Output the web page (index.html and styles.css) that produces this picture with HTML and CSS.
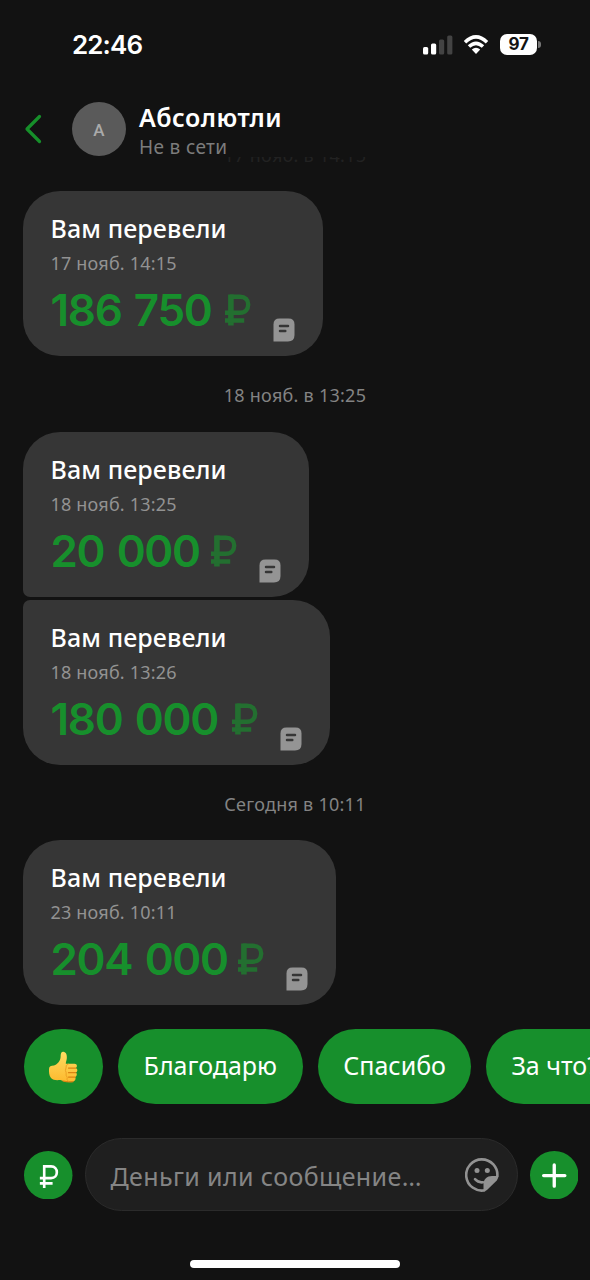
FILE: index.html
```html
<!DOCTYPE html>
<html lang="ru">
<head>
<meta charset="utf-8">
<title>Абсолютли</title>
<link rel="stylesheet" href="styles.css">
</head>
<body>
<svg class="defs" aria-hidden="true">
  <symbol id="note" viewBox="0 0 22 24">
    <path d="M.5 23.5V6.5Q.5.6 6.5.6H15.500Q21.500.6 21.500 6.500V17Q21.500 23.500 15 23.500Z" fill="#949494"/>
    <path d="M7 8.100H15M7 13.100H12.300" stroke="#363636" stroke-width="2.500" stroke-linecap="round"/>
  </symbol>
  <symbol id="ruble" viewBox="0 0 26 32">
    <g fill="none" stroke="#236f30"><path d="M5.900 31.500V.5" stroke-width="5.600"/><path d="M5 2.800H15C20.200 2.800 23.200 5.900 23.200 10.500C23.200 15.500 20.200 18.700 15 18.700H0M0 26.500H19.200" stroke-width="4.400"/></g>
  </symbol>
</svg>
<div class="screen">
  <header class="top">
    <div class="status">
      <span class="time">22:46</span>
      <div class="indicators">
        <svg class="signal" viewBox="0 0 30 20"><rect x="0" y="12" width="5.200" height="7.400" rx="1.500" fill="#fff"/><rect x="8" y="8.600" width="5.200" height="10.800" rx="1.500" fill="#fff"/><rect x="16" y="4.500" width="5.200" height="14.900" rx="1.500" fill="#434343"/><rect x="24.200" y="0.500" width="5.200" height="18.900" rx="1.500" fill="#434343"/></svg>
        <svg class="wifi" viewBox="0 0 26 20"><path d="M2 7.200Q13-3.300 24 7.200M6 11.600Q13 5 20 11.600" fill="none" stroke="#fff" stroke-width="3.500"/><path d="M8.800 14.600Q13 10.800 17.200 14.600L13 19Z" fill="#fff"/></svg>
        <div class="battery">97</div><i class="cap"></i>
      </div>
    </div>
    <div class="bar">
      <svg class="back" viewBox="0 0 18 30"><path d="M15.500 2.500L3 15L15.500 27.500" fill="none" stroke="#168f2a" stroke-width="3.200" stroke-linecap="round" stroke-linejoin="round"/></svg>
      <div class="avatar">А</div>
      <div class="who"><span class="name">Абсолютли</span><span class="presence">Не в сети</span></div>
    </div>
  </header>
  <main class="feed">
    <div class="date faded">17 нояб. в 14:15</div>
    <article class="card w1"><h2>Вам перевели</h2><time>17 нояб. 14:15</time><div class="row"><b class="amount">186 750</b><svg class="rub"><use href="#ruble"/></svg><svg class="note"><use href="#note"/></svg></div></article>
    <div class="date">18 нояб. в 13:25</div>
    <article class="card w2 first"><h2>Вам перевели</h2><time>18 нояб. 13:25</time><div class="row"><b class="amount">20 000</b><svg class="rub"><use href="#ruble"/></svg><svg class="note"><use href="#note"/></svg></div></article>
    <article class="card w3 last"><h2>Вам перевели</h2><time>18 нояб. 13:26</time><div class="row"><b class="amount">180 000</b><svg class="rub"><use href="#ruble"/></svg><svg class="note"><use href="#note"/></svg></div></article>
    <div class="date">Сегодня в 10:11</div>
    <article class="card w4"><h2>Вам перевели</h2><time>23 нояб. 10:11</time><div class="row"><b class="amount">204 000</b><svg class="rub"><use href="#ruble"/></svg><svg class="note"><use href="#note"/></svg></div></article>
  </main>
  <div class="chips">
    <button class="chip thumb"><svg viewBox="0 0 30 32">
      <defs><linearGradient id="skin" x1="0" y1="0" x2="0" y2="1"><stop offset="0" stop-color="#ffdc62"/><stop offset="1" stop-color="#fdb92e"/></linearGradient></defs>
      <path d="M1 18C1 15.500 3 14.800 6 14.600C9.500 13.500 12.500 9.500 12.600 6C12.600 2.500 13.300.7 15.300.8C18 1 19.200 4 18.800 7.500C18.600 9.500 17.800 11.300 17.800 12.800H26.500C29.300 12.800 29.700 16.200 27.700 17C30 17.800 29.800 21 27.700 21.600C29.500 22.500 29 25.600 27 26C28.200 27 27.500 30.300 25 30.500C20 31.200 16 30.800 12.500 29C9 29.200 5 29.500 3 27C1 24.500.9 21 1 18Z" fill="url(#skin)"/>
      <path d="M27.700 17.100H20.500M27.700 21.700H20.500M27 26.100H20.500M25 30.600Q20 31.300 15 30" fill="none" stroke="#dc8413" stroke-width="1.200" stroke-linecap="round"/><path d="M20.500 13Q17.300 13.600 18 17Q16.800 19.500 18.200 21.800Q17.500 24.500 19.200 26.300Q18.300 29 20.500 30.500" fill="none" stroke="#eda022" stroke-width="1"/>
    </svg></button>
    <button class="chip c1">Благодарю</button>
    <button class="chip c2">Спасибо</button>
    <button class="chip c3">За что?</button>
  </div>
  <footer class="composer">
    <svg class="round" viewBox="0 0 48 48"><circle cx="24" cy="24" r="24" fill="#178f2c"/><path d="M20 36.500V15.200H26.800C30.500 15.200 32.500 17.700 32.500 21C32.500 24.300 30.500 26.800 26.800 26.800H15.700M15.700 32H28.300" fill="none" stroke="#fff" stroke-width="2.600"/></svg>
    <div class="field"><span class="placeholder">Деньги или сообщение…</span>
      <svg class="sticker" viewBox="0 0 34 34"><path d="M20 32.200A15.600 15.600 0 1 1 32.300 18.500" fill="none" stroke="#929292" stroke-width="2.600"/><circle cx="12" cy="12.500" r="2.500" fill="#929292"/><circle cx="22.300" cy="12.500" r="2.500" fill="#929292"/><path d="M10 21.200Q13.500 25 18 24.200" fill="none" stroke="#929292" stroke-width="2.600" stroke-linecap="round"/><path d="M33.500 18H27C22 18 18.500 21.500 18.500 26V33.500Q20.500 33.400 22 32L31.800 22.500Q33.400 20.500 33.500 18Z" fill="#929292"/></svg>
    </div>
    <svg class="round" viewBox="0 0 48 48"><circle cx="24" cy="24" r="24" fill="#178f2c"/><path d="M24 13.800V34.800M13.500 24.300H34.500" stroke="#fff" stroke-width="3.300" stroke-linecap="round"/></svg>
  </footer>
  <div class="home"></div>
</div>
</body>
</html>
```
FILE: styles.css
```css
* { box-sizing: border-box; }
body { margin: 0; background: #121212; color: #fff; font-family: "Noto Sans", sans-serif; }
.defs { position: absolute; width: 0; height: 0; }
.screen { width: 590px; height: 1280px; overflow: hidden; display: flex; flex-direction: column; }
.top { position: relative; z-index: 1; height: 157px; flex: none; background: #121212; }
.status { height: 87px; display: flex; justify-content: space-between; padding: 29px 49px 0 72px; }
.time { font: 600 26px/31px Inter, sans-serif; letter-spacing: -0.900px; }
.indicators { display: flex; height: 31px; align-items: center; }
.signal { width: 30px; height: 20px; margin-right: 10px; }
.wifi { width: 26px; height: 20px; margin-right: 11px; }
.battery { width: 37px; height: 21px; border-radius: 7px; background: #fff; color: #121212; font: 700 17px/21px Inter, sans-serif; letter-spacing: -0.300px; text-align: center; }
.cap { width: 3px; height: 7px; margin-left: 1px; border-radius: 0 3px 3px 0; background: #777; }
.bar { display: flex; padding: 15px 0 0 24px; }
.back { width: 18px; height: 30px; margin: 12px 30px 0 0; }
.avatar { width: 54px; height: 54px; border-radius: 50%; background: #5a5a5a; color: #aaa; font: 500 17px/56px Roboto, sans-serif; text-align: center; margin-right: 13px; }
.who { display: flex; flex-direction: column; }
.name { font-weight: 600; font-size: 25px; line-height: 32px; letter-spacing: 0.480px; margin-top: -1px; }
.presence { font-size: 19px; line-height: 26px; letter-spacing: 0.350px; color: #7c7c7c; margin-top: 1px; }
.feed { margin-top: -41px; display: flex; flex-direction: column; align-items: flex-start; padding-left: 23px; }
.date { width: 544px; height: 75.200px; text-align: center; color: #838383; font-size: 18px; line-height: 79px; letter-spacing: 0.260px; }
.faded { color: #222; }
.card { height: 165.200px; flex: none; border-radius: 37px; background: #363636; padding: 21px 28px 0 27.500px; }
.first { border-bottom-left-radius: 7px; margin-bottom: 3px; }
.last { border-top-left-radius: 7px; }
.w1 { width: 299.500px; }
.w2 { width: 286px; }
.w3 { width: 307px; }
.w4 { width: 313px; }
.card h2 { margin: 0; font-size: 25px; line-height: 32px; font-weight: 500; letter-spacing: 0.100px; }
.card time { display: block; margin-top: 7px; font-size: 18px; line-height: 24px; letter-spacing: 0.200px; color: #929292; }
.row { display: flex; height: 66px; align-items: flex-start; padding-top: 1px; }
.amount { font: 600 44px/68px Inter, sans-serif; letter-spacing: -1.300px; word-spacing: 2.500px; color: #178f2c; }
.rub { width: 26px; height: 32px; margin: 18px 22px 0 auto; }
.note { width: 22px; height: 24px; margin-top: 42px; }
.chips { display: flex; gap: 15.300px; padding-left: 24px; margin-top: 24px; flex: none; }
.chip { height: 75px; flex: none; border: 0; border-radius: 37.500px; padding: 0 0 3px; background: #178f2c; color: #fff; font: 400 25px/32px "Noto Sans", sans-serif; white-space: nowrap; }
.thumb { width: 78.500px; }
.thumb svg { width: 30px; height: 32px; vertical-align: middle; }
.c1 { width: 185px; }
.c2 { width: 153px; }
.c3 { width: 160px; text-align: left; padding-left: 25px; }
.composer { display: flex; align-items: center; padding-left: 24px; margin-top: 34px; flex: none; }
.round { width: 48.500px; height: 48.500px; }
.field { width: 433px; height: 73px; margin: 0 12px; border: 1px solid #2b2b2b; border-radius: 37px; background: #1f1f1f; display: flex; align-items: center; justify-content: space-between; padding: 0 18px 0 25px; }
.placeholder { font-size: 25px; letter-spacing: 0.370px; color: #858585; padding-top: 2px; }
.sticker { width: 34px; height: 34px; }
.home { width: 210px; height: 8px; border-radius: 4px; background: #fff; margin: 49px auto 0; flex: none; }
```
